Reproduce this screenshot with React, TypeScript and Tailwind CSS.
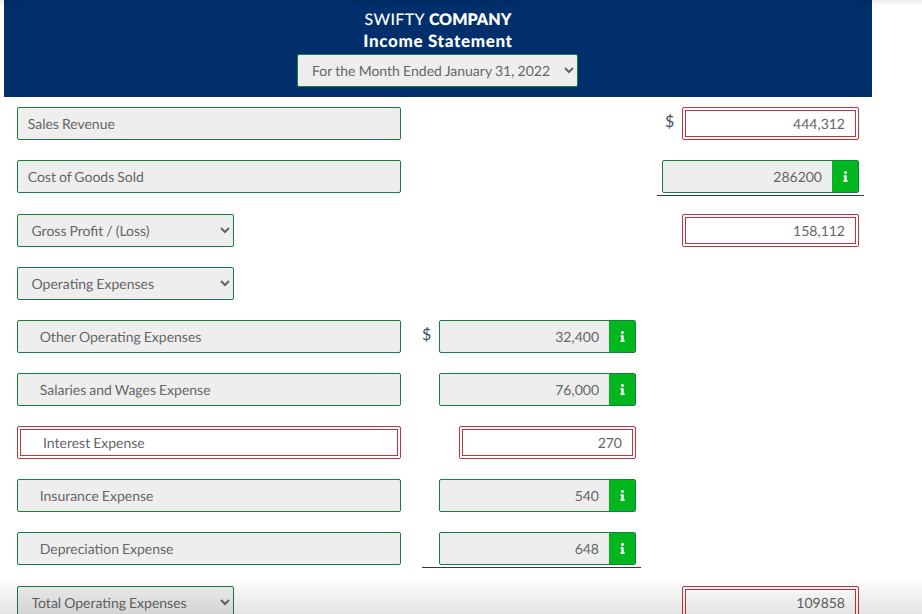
import { FaInfo } from "react-icons/fa";

const Green = ({ text, indent }: { text: string; indent?: boolean }) => (
  <div className={`w-[384px] h-[33px] flex items-center rounded-[2px] border border-[#15803d] bg-[#eeeeee] text-[14px] text-[#666666] [word-spacing:-0.6px] ${indent ? "pl-[21.7px]" : "pl-[9.7px]"}`}>
    {text}
  </div>
);

const Sel = ({ text, wide }: { text: string; wide?: boolean }) => (
  <select
    defaultValue={text}
    className={`${wide ? "w-[281px] pl-[10px] [word-spacing:-0.4px]" : "w-[217px] pl-[9.5px] [word-spacing:-0.6px]"} h-[33px] rounded-[2px] border border-[#15803d] bg-[#eeeeee] text-[14px] text-[#666666] pr-[2px] outline-none [text-rendering:geometricPrecision]`}
    style={{ appearance: "auto" }}
  >
    <option>{text}</option>
  </select>
);

const Red = ({ text, className, right }: { text: string; className: string; right?: boolean }) => (
  <div className={`${className} h-[33px] rounded-[2px] border border-[#c1343c] p-[2px]`}>
    <div className={`h-full border border-[#c1343c] flex items-center text-[14px] text-[#666666] [word-spacing:-0.6px] ${right ? "justify-end pr-[10px]" : "pl-[22px]"}`}>
      {text}
    </div>
  </div>
);

const Info = ({ text, className }: { text: string; className: string }) => (
  <div className={`${className} h-[33px] flex rounded-[2px] border border-[#15803d] bg-[#eeeeee] overflow-hidden`}>
    <div className="flex-1 flex items-center justify-end pr-[10px] text-[14px] text-[#666666]">{text}</div>
    <div className="w-[27px] -my-px -mr-px bg-[#00b71e] flex items-center justify-center text-white">
      <FaInfo className="w-[9px] h-[11px]" />
    </div>
  </div>
);

const Dollar = () => <span className="block text-[16px] leading-[30px] text-[#44525f]">$</span>;

const Row = ({ label, mid, right, extra }: { label: React.ReactNode; mid?: React.ReactNode; right?: React.ReactNode; extra?: boolean }) => (
  <div className={`flex h-[33px] items-start ${extra ? "mt-px" : ""}`}>
    <div className="w-[405px] shrink-0">{label}</div>
    <div className="w-[219px] shrink-0">{mid}</div>
    <div className="w-[207px] ml-[16px] shrink-0">{right}</div>
  </div>
);

const Mid = ({ children, dollar, line, offset }: { children: React.ReactNode; dollar?: boolean; line?: boolean; offset?: boolean }) => (
  <div className={`flex items-start h-[36px] ${line ? "border-b border-[#333a40]" : ""}`}>
    <div className={`${offset ? "w-[37px]" : "w-[17px]"} shrink-0`}>{dollar && <Dollar />}</div>
    {children}
  </div>
);

export default function App() {
  return (
    <div className="relative w-[922px] h-[614px] overflow-hidden bg-white [text-rendering:geometricPrecision]" style={{ fontFamily: "Lato, sans-serif" }}>
      <div className="ml-1 w-[868px] h-[97px] bg-[#002f6b] flex flex-col items-center pt-[9px] text-white text-[16px] leading-[22px]">
        <div className="font-medium"><span className="tracking-[0.3px]">SWIFTY</span> <span className="font-extrabold">COMPANY</span></div>
        <div className="font-black text-[17px] leading-[20px] tracking-[0.65px]">Income Statement</div>
        <div className="mt-[3px] mr-px flex"><Sel wide text="For the Month Ended January 31, 2022" /></div>
      </div>
      <div className="ml-[17px] mt-[10px] flex flex-col gap-5">
        <Row
          label={<Green text="Sales Revenue" />}
          right={<div className="flex"><div className="w-[25px] pl-[8px]"><Dollar /></div><Red text="444,312" right className="w-[177px]" /></div>}
        />
        <Row
          label={<Green text="Cost of Goods Sold" />}
          right={<div className="h-[36px] border-b border-[#333a40] pl-[5px]"><Info text="286200" className="w-[197px]" /></div>}
        />
        <Row extra label={<Sel text="Gross Profit / (Loss)" />} right={<div className="pl-[25px]"><Red text="158,112" right className="w-[177px]" /></div>} />
        <Row label={<Sel text="Operating Expenses" />} />
        <Row label={<Green indent text="Other Operating Expenses" />} mid={<Mid dollar><Info text="32,400" className="w-[197px]" /></Mid>} />
        <Row label={<Green indent text="Salaries and Wages Expense" />} mid={<Mid><Info text="76,000" className="w-[197px]" /></Mid>} />
        <Row label={<Red text="Interest Expense" className="w-[384px]" />} mid={<Mid offset><Red text="270" right className="w-[177px]" /></Mid>} />
        <Row label={<Green indent text="Insurance Expense" />} mid={<Mid><Info text="540" className="w-[197px]" /></Mid>} />
        <Row label={<Green indent text="Depreciation Expense" />} mid={<Mid line><Info text="648" className="w-[197px]" /></Mid>} />
        <Row extra label={<Sel text="Total Operating Expenses" />} right={<div className="pl-[25px]"><Red text="109858" right className="w-[177px]" /></div>} />
      </div>
      <div className="absolute inset-x-0 top-0 h-[6px] bg-gradient-to-b from-[#00000014] to-transparent pointer-events-none" />
      <div className="absolute inset-x-0 bottom-0 h-[36px] bg-gradient-to-b from-[#00000000] to-[#0000001c] pointer-events-none" />
    </div>
  );
}
